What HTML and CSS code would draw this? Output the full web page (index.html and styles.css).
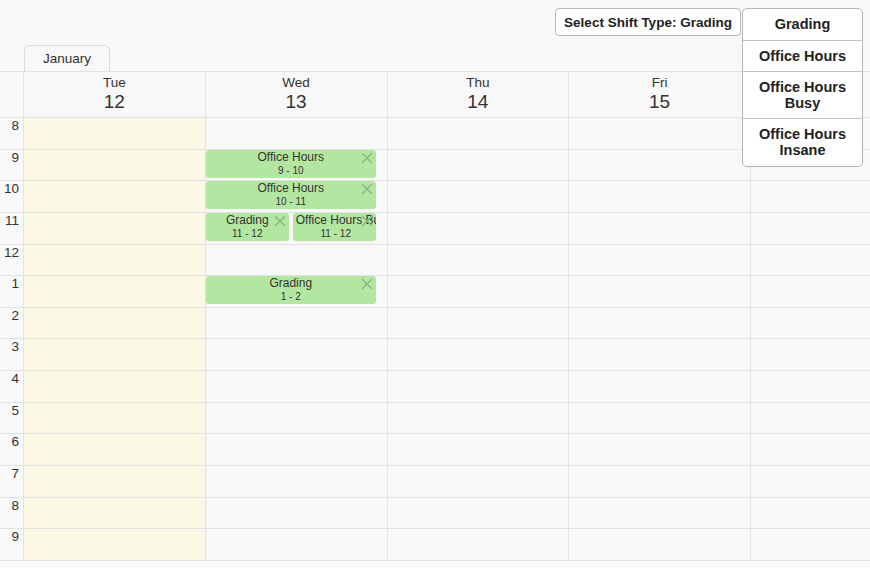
FILE: index.html
```html
<!DOCTYPE html>
<html>
<head>
<meta charset="utf-8">
<link rel="stylesheet" href="styles.css">
</head>
<body>
<div class="page">
  <div class="toolbar">
    <div class="tab">January</div>
    <button class="select-btn">Select Shift Type: Grading</button>
    <ul class="dropdown">
      <li class="opt first">Grading</li>
      <li class="opt">Office Hours</li>
      <li class="opt">Office Hours<br>Busy</li>
      <li class="opt last">Office Hours<br>Insane</li>
    </ul>
  </div>
  <div class="header">
    <div class="gutter-head"></div>
    <div class="day-head"><div class="dname">Tue</div><div class="dnum">12</div></div>
    <div class="day-head"><div class="dname">Wed</div><div class="dnum">13</div></div>
    <div class="day-head"><div class="dname">Thu</div><div class="dnum">14</div></div>
    <div class="day-head"><div class="dname">Fri</div><div class="dnum">15</div></div>
    <div class="day-head"></div>
  </div>
  <div class="body">
    <div class="gutter">
      <div class="slot"><span>8</span></div>
      <div class="slot"><span>9</span></div>
      <div class="slot"><span>10</span></div>
      <div class="slot"><span>11</span></div>
      <div class="slot"><span>12</span></div>
      <div class="slot"><span>1</span></div>
      <div class="slot"><span>2</span></div>
      <div class="slot"><span>3</span></div>
      <div class="slot"><span>4</span></div>
      <div class="slot"><span>5</span></div>
      <div class="slot"><span>6</span></div>
      <div class="slot"><span>7</span></div>
      <div class="slot"><span>8</span></div>
      <div class="slot"><span>9</span></div>
    </div>
    <div class="col today">
      <div class="slot"></div><div class="slot"></div><div class="slot"></div><div class="slot"></div><div class="slot"></div><div class="slot"></div><div class="slot"></div>
      <div class="slot"></div><div class="slot"></div><div class="slot"></div><div class="slot"></div><div class="slot"></div><div class="slot"></div><div class="slot"></div>
    </div>
    <div class="col wed">
      <div class="slot"></div><div class="slot"></div><div class="slot"></div><div class="slot"></div><div class="slot"></div><div class="slot"></div><div class="slot"></div>
      <div class="slot"></div><div class="slot"></div><div class="slot"></div><div class="slot"></div><div class="slot"></div><div class="slot"></div><div class="slot"></div>
      <div class="event full h9">
        <div class="etitle">Office Hours</div><div class="etime">9 - 10</div>
        <svg class="close" viewBox="0 0 12 12"><path d="M1 1L11 11M11 1L1 11"/></svg>
      </div>
      <div class="event full h10">
        <div class="etitle">Office Hours</div><div class="etime">10 - 11</div>
        <svg class="close" viewBox="0 0 12 12"><path d="M1 1L11 11M11 1L1 11"/></svg>
      </div>
      <div class="event half-left h11">
        <div class="etitle">Grading</div><div class="etime">11 - 12</div>
        <svg class="close" viewBox="0 0 12 12"><path d="M1 1L11 11M11 1L1 11"/></svg>
      </div>
      <div class="event half-right h11">
        <div class="etitle">Office Hours Busy</div><div class="etime">11 - 12</div>
        <svg class="close" viewBox="0 0 12 12"><path d="M1 1L11 11M11 1L1 11"/></svg>
      </div>
      <div class="event full h13">
        <div class="etitle">Grading</div><div class="etime">1 - 2</div>
        <svg class="close" viewBox="0 0 12 12"><path d="M1 1L11 11M11 1L1 11"/></svg>
      </div>
    </div>
    <div class="col">
      <div class="slot"></div><div class="slot"></div><div class="slot"></div><div class="slot"></div><div class="slot"></div><div class="slot"></div><div class="slot"></div>
      <div class="slot"></div><div class="slot"></div><div class="slot"></div><div class="slot"></div><div class="slot"></div><div class="slot"></div><div class="slot"></div>
    </div>
    <div class="col">
      <div class="slot"></div><div class="slot"></div><div class="slot"></div><div class="slot"></div><div class="slot"></div><div class="slot"></div><div class="slot"></div>
      <div class="slot"></div><div class="slot"></div><div class="slot"></div><div class="slot"></div><div class="slot"></div><div class="slot"></div><div class="slot"></div>
    </div>
    <div class="col last-col">
      <div class="slot"></div><div class="slot"></div><div class="slot"></div><div class="slot"></div><div class="slot"></div><div class="slot"></div><div class="slot"></div>
      <div class="slot"></div><div class="slot"></div><div class="slot"></div><div class="slot"></div><div class="slot"></div><div class="slot"></div><div class="slot"></div>
    </div>
  </div>
</div>
</body>
</html>
```
FILE: styles.css
```css
html, body {
  margin: 0;
  padding: 0;
  background: #f8f8f8;
}
body {
  font-family: "Liberation Sans", Arial, Helvetica, sans-serif;
  color: #333;
  width: 870px;
  height: 568px;
  overflow: hidden;
}
.page {
  width: 870px;
}
.toolbar {
  position: relative;
  height: 71px;
  display: flex;
  align-items: flex-end;
  padding-left: 24px;
}
.tab {
  box-sizing: border-box;
  width: 86px;
  height: 26px;
  border: 1px solid #dcdcdc;
  border-bottom: none;
  border-radius: 6px 6px 0 0;
  background: #f8f8f8;
  font-size: 13.5px;
  line-height: 25px;
  text-align: center;
  color: #333;
}
.select-btn {
  align-self: flex-start;
  margin: 8px 0 0 445px;
  box-sizing: border-box;
  width: 186px;
  height: 28px;
  background: #fff;
  border: 1px solid #b9b9b9;
  border-radius: 4px;
  font-family: "Liberation Sans", Arial, sans-serif;
  font-weight: bold;
  font-size: 13.5px;
  color: #222;
  padding: 0;
}
.dropdown {
  position: absolute;
  left: 742px;
  top: 8px;
  z-index: 5;
  margin: 0;
  padding: 0;
  list-style: none;
  width: 121px;
  box-sizing: border-box;
  background: #fff;
  border: 1px solid #b5b5b5;
  border-radius: 5px;
}
.opt {
  border-top: 1px solid #c4c4c4;
  font-weight: bold;
  font-size: 14.5px;
  line-height: 16px;
  color: #222;
  text-align: center;
  padding: 7px 0;
}
.opt.first {
  border-top: none;
  padding: 7px 0 8px;
}
.opt.last {
  padding-bottom: 8px;
}
.header {
  display: grid;
  grid-template-columns: 23px repeat(4, 181.75px) 1fr;
  height: 46px;
  box-sizing: border-box;
  border-top: 1px solid #e3e3e3;
}
.day-head {
  border-left: 1px solid #e3e3e3;
  text-align: center;
  padding-top: 3px;
}
.dname {
  font-size: 13.5px;
  line-height: 16px;
}
.dnum {
  font-size: 19px;
  line-height: 22px;
}
.body {
  display: grid;
  grid-template-columns: 23px repeat(4, 181.75px) 1fr;
  border-bottom: 1px solid #e3e3e3;
}
.gutter .slot span {
  display: block;
  text-align: right;
  padding-right: 4px;
  font-size: 13.5px;
  line-height: 15px;
  color: #333;
}
.slot {
  box-sizing: border-box;
  height: 31.64px;
  border-top: 1px solid #e3e3e3;
}
.col {
  position: relative;
  border-left: 1px solid #e3e3e3;
}
.col.today {
  background: #fcf8e6;
}
.event {
  position: absolute;
  box-sizing: border-box;
  height: 28px;
  background: #b3e6a1;
  border-radius: 3px;
  text-align: center;
  overflow: hidden;
  white-space: nowrap;
  color: #333;
  padding-top: 0;
}
.event.full {
  left: 0;
  width: 170px;
}
.event.half-left {
  left: 0;
  width: 83px;
}
.event.half-right {
  left: 87px;
  width: 83px;
  padding-left: 3px;
}
.h9 { top: 32.5px; }
.h10 { top: 64px; }
.h11 { top: 95.5px; }
.h13 { top: 158.5px; }
.etitle {
  font-size: 12px;
  line-height: 14px;
}
.etime {
  font-size: 10px;
  line-height: 13px;
}
.close {
  position: absolute;
  right: 3px;
  top: 2px;
  width: 12px;
  height: 12px;
  fill: none;
  stroke: #8cb887;
  stroke-width: 1.5;
}
```
